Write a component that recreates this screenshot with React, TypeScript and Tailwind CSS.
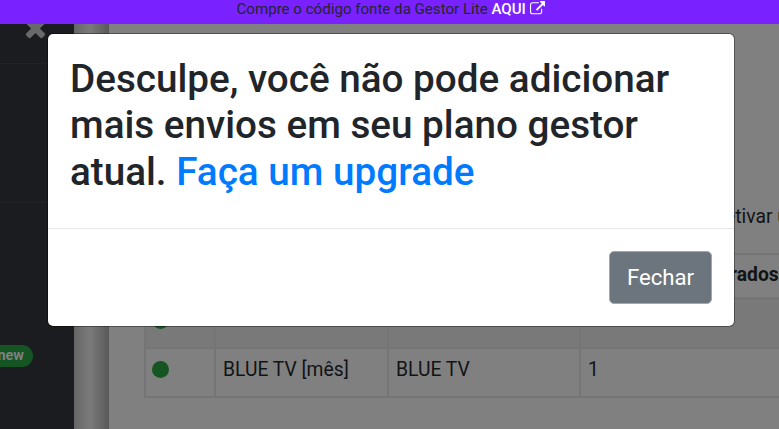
function ExternalLinkIcon({ className }: { className: string }) {
  return (
    <svg viewBox="0 0 1792 1600" fill="currentColor" className={className}>
      <path d="M1408 928v320q0 119-84.500 203.500t-203.500 84.500h-832q-119 0-203.500-84.500t-84.500-203.500v-832q0-119 84.500-203.500t203.500-84.500h704q14 0 23 9t9 23v64q0 14-9 23t-23 9h-704q-66 0-113 47t-47 113v832q0 66 47 113t113 47h832q66 0 113-47t47-113v-320q0-14 9-23t23-9h64q14 0 23 9t9 23zm384-864v512q0 26-19 45t-45 19-45-19l-176-176-652 652q-10 10-23 10t-23-10l-114-114q-10-10-10-23t10-23l652-652-176-176q-19-19-19-45t19-45 45-19h512q26 0 45 19t19 45z" />
    </svg>
  );
}

function CloseIcon({ className }: { className: string }) {
  return (
    <svg viewBox="0 0 1792 1792" fill="currentColor" className={className}>
      <path d="M1490 1322q0 40-28 68l-136 136q-28 28-68 28t-68-28l-294-294-294 294q-28 28-68 28t-68-28l-136-136q-28-28-28-68t28-68l294-294-294-294q-28-28-28-68t28-68l136-136q28-28 68-28t68 28l294 294 294-294q28-28 68-28t68 28l136 136q28 28 28 68t-28 68l-294 294 294 294q28 28 28 68z" />
    </svg>
  );
}

function Banner() {
  return (
    <header className="relative z-20 h-6 shrink-0 bg-[#7922ff]">
      <p className="ml-[236.5px] flex h-[18px] items-center whitespace-pre text-[15.1px] leading-[18px] text-[#212529]">
        <span>Compre o código fonte da Gestor Lite </span>
        <a className="flex items-center text-white">
          <span className="font-medium">AQUI</span>
          <ExternalLinkIcon className="ml-1 mb-0.5 h-[14px] w-[15.5px]" />
        </a>
      </p>
    </header>
  );
}

function Sidebar() {
  return (
    <aside className="flex w-[74px] shrink-0 flex-col bg-[#1b1c20]">
      <div className="h-10 border-b border-[#202125]">
        <CloseIcon className="-mt-[11px] ml-[21px] size-[29px] text-[#696969]" />
      </div>
      <div className="h-[139px] border-b border-[#222327]" />
      <span className="mt-[142px] flex h-[22px] w-[33px] items-center justify-end rounded-r-full bg-[#145523] pr-[9px] text-[14.5px] font-bold leading-none text-[#808080]">
        new
      </span>
    </aside>
  );
}

function Dot() {
  return <span className="block size-[17px] rounded-full bg-[#145523]" />;
}

const cell = "border-r-2 border-b-2 border-[#747576]";

function Content() {
  return (
    <main className="min-w-0 flex-1 overflow-hidden bg-[#808080] pl-[35px] text-[19.3px] text-[#111315]">
      <p className="mt-[181px] h-[48px] whitespace-nowrap pl-[581px] leading-6">
        etivar u
      </p>
      <div className="grid w-[760px] grid-cols-[70px_173px_192px_325px] border-t-2 border-l-2 border-[#747576]">
        <div className={`${cell} h-[44px]`} />
        <div className={cell} />
        <div className={cell} />
        <div className={`${cell} whitespace-nowrap pl-[149px] font-bold leading-[39px]`}>
          rados
        </div>
        <div className={`${cell} flex h-[50px] items-center border-t bg-[#797979] pb-[7px] pl-[6px]`}>
          <Dot />
        </div>
        <div className={`${cell} border-t bg-[#797979]`} />
        <div className={`${cell} border-t bg-[#797979]`} />
        <div className={`${cell} border-t bg-[#797979]`} />
        <div className={`${cell} h-[49px] pt-[12px] pl-[6px]`}>
          <Dot />
        </div>
        <div className={`${cell} pl-[7px] leading-[41px]`}>BLUE TV [mês]</div>
        <div className={`${cell} pl-[7px] leading-[41px]`}>BLUE TV</div>
        <div className={`${cell} pl-[7px] leading-[41px]`}>1</div>
      </div>
    </main>
  );
}

function Modal() {
  return (
    <section
      role="dialog"
      className="absolute top-[33px] left-[47px] z-30 flex h-[294px] w-[688px] flex-col overflow-hidden rounded-[6px] border border-black/35 bg-white bg-clip-padding"
    >
      <div className="h-[195px] border-b border-[#e5e9ed] pt-[21.7px] pl-[22px]">
        <h3 className="whitespace-nowrap text-[38.65px] font-medium leading-[46.5px] text-[#212529]">
          Desculpe, você não pode adicionar
          <br />
          mais envios em seu plano gestor
          <br />
          atual. <a className="text-[#007bff]">Faça um upgrade</a>
        </h3>
      </div>
      <footer className="flex justify-end pt-[22px] pr-[22px]">
        <button className="h-[53px] w-[103px] rounded-[5px] border border-[#a2a8ae] bg-[#6c757d] text-[22.2px] text-white">
          Fechar
        </button>
      </footer>
    </section>
  );
}

export default function App() {
  return (
    <div className="relative flex h-[429px] w-[779px] flex-col overflow-hidden font-[Roboto,sans-serif]">
      <Banner />
      <div className="flex min-h-0 flex-1">
        <Sidebar />
        <div className="w-[35px] shrink-0 bg-linear-to-r from-[#656565] via-[#7b7b7b] via-45% to-[#595959]" />
        <Content />
      </div>
      <Modal />
    </div>
  );
}
